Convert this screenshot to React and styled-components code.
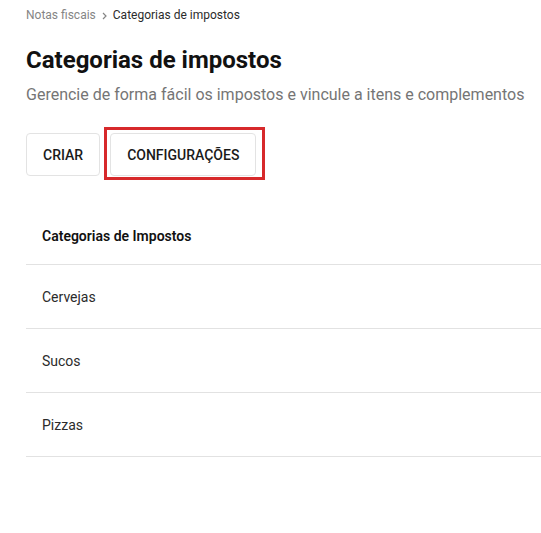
import styled, { createGlobalStyle } from 'styled-components';

const GlobalStyle = createGlobalStyle`
  body {
    margin: 0;
    background: #fff;
    font-family: Roboto, "Liberation Sans", sans-serif;
    color: #1a1a1a;
  }
`;

const Page = styled.main`
  padding: 6px 0 0 26px;
  overflow: hidden;
`;

const Breadcrumb = styled.nav`
  display: flex;
  align-items: center;
  gap: 5px;
  font-size: 12px;
  line-height: 18px;
  color: #858585;
`;

const Crumb = styled.span`
  color: ${p => (p.$current ? '#2b2b2b' : '#858585')};
`;

const Sep = styled.svg`
  width: 7px;
  height: 8px;
  margin-top: 1px;
`;

const Title = styled.h1`
  margin: 20px 0 0;
  font-size: 24px;
  line-height: 32px;
  font-weight: 700;
  color: #111;
`;

const Subtitle = styled.p`
  margin: 7px 0 0;
  font-size: 16px;
  line-height: 24px;
  color: #757575;
`;

const Actions = styled.div`
  display: flex;
  gap: 10px;
  margin-top: 26px;
`;

const Button = styled.button`
  position: relative;
  height: 43px;
  padding: 0 16px;
  background: #fff;
  border: 1px solid #e3e3e3;
  border-radius: 4px;
  font-family: inherit;
  font-size: 14px;
  font-weight: 500;
  color: #1a1a1a;

  ${p =>
    p.$highlight &&
    `
    &::after {
      content: '';
      position: absolute;
      top: -7px;
      left: -7px;
      right: -10px;
      bottom: -5px;
      border: 3px solid #d7292b;
      pointer-events: none;
    }
  `}
`;

const Table = styled.div`
  margin-top: 32px;
  margin-right: -20px;
`;

const Row = styled.div`
  display: flex;
  align-items: center;
  height: ${p => (p.$head ? '56px' : '63px')};
  padding: 0 16px;
  border-bottom: 1px solid #e2e2e2;
  font-size: 14px;
  font-weight: ${p => (p.$head ? 600 : 400)};
  color: ${p => (p.$head ? '#111' : '#2b2b2b')};
`;

const categories = ['Cervejas', 'Sucos', 'Pizzas'];

export default function App() {
  return (
    <>
      <GlobalStyle />
      <Page>
        <Breadcrumb>
          <Crumb>Notas fiscais</Crumb>
          <Sep viewBox="0 0 7 8" fill="none" stroke="#858585" strokeWidth="1.2">
            <path d="M2 1 L5 4 L2 7" />
          </Sep>
          <Crumb $current>Categorias de impostos</Crumb>
        </Breadcrumb>
        <Title>Categorias de impostos</Title>
        <Subtitle>Gerencie de forma fácil os impostos e vincule a itens e complementos</Subtitle>
        <Actions>
          <Button>CRIAR</Button>
          <Button $highlight>CONFIGURAÇÕES</Button>
        </Actions>
        <Table>
          <Row $head>Categorias de Impostos</Row>
          {categories.map(name => (
            <Row key={name}>{name}</Row>
          ))}
        </Table>
      </Page>
    </>
  );
}
